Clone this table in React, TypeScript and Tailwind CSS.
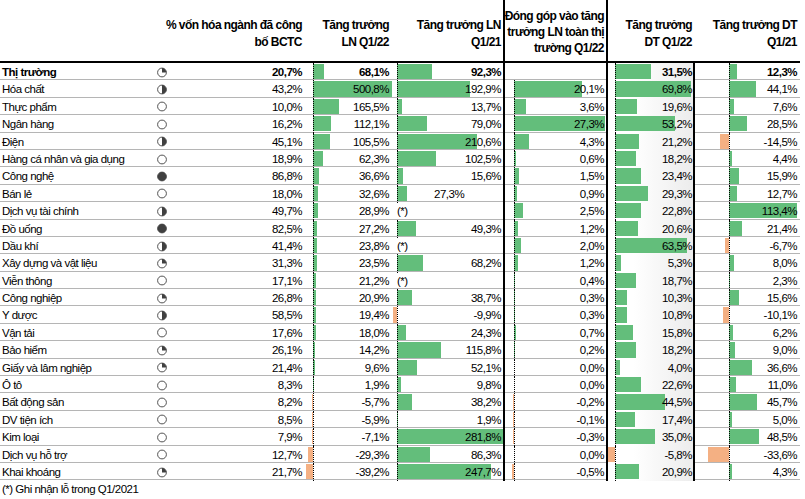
import React from 'react';

type Ball = 'e' | 'q' | 'h' | 'f';
type Note = 'star' | 'left' | undefined;

interface Row {
  name: string;
  ball: Ball;
  von: number;
  ln22: number;
  ln21: number | null;
  note?: Note;
  dg: number | null;
  dt22: number;
  dt21: number;
  bold?: boolean;
}

const rows: Row[] = [
  { name: 'Thị trường', ball: 'q', von: 20.7, ln22: 68.1, ln21: 92.3, dg: null, dt22: 31.5, dt21: 12.3, bold: true },
  { name: 'Hóa chất', ball: 'h', von: 43.2, ln22: 500.8, ln21: 192.9, dg: 20.1, dt22: 69.8, dt21: 44.1 },
  { name: 'Thực phẩm', ball: 'e', von: 10.0, ln22: 165.5, ln21: 13.7, dg: 3.6, dt22: 19.6, dt21: 7.6 },
  { name: 'Ngân hàng', ball: 'e', von: 16.2, ln22: 112.1, ln21: 79.0, dg: 27.3, dt22: 53.2, dt21: 28.5 },
  { name: 'Điện', ball: 'h', von: 45.1, ln22: 105.5, ln21: 210.6, dg: 4.3, dt22: 21.2, dt21: -14.5 },
  { name: 'Hàng cá nhân và gia dụng', ball: 'e', von: 18.9, ln22: 62.3, ln21: 102.5, dg: 0.6, dt22: 18.2, dt21: 4.4 },
  { name: 'Công nghệ', ball: 'f', von: 86.8, ln22: 36.6, ln21: 15.6, dg: 1.5, dt22: 23.4, dt21: 15.9 },
  { name: 'Bán lẻ', ball: 'e', von: 18.0, ln22: 32.6, ln21: 27.3, note: 'left', dg: 0.9, dt22: 29.3, dt21: 12.7 },
  { name: 'Dịch vụ tài chính', ball: 'h', von: 49.7, ln22: 28.9, ln21: null, note: 'star', dg: 2.5, dt22: 22.8, dt21: 113.4 },
  { name: 'Đồ uống', ball: 'f', von: 82.5, ln22: 27.2, ln21: 49.3, dg: 1.2, dt22: 20.6, dt21: 21.4 },
  { name: 'Dầu khí', ball: 'h', von: 41.4, ln22: 23.8, ln21: null, note: 'star', dg: 2.0, dt22: 63.5, dt21: -6.7 },
  { name: 'Xây dựng và vật liệu', ball: 'q', von: 31.3, ln22: 23.5, ln21: 68.2, dg: 1.2, dt22: 5.3, dt21: 8.0 },
  { name: 'Viễn thông', ball: 'e', von: 17.1, ln22: 21.2, ln21: null, note: 'star', dg: 0.4, dt22: 18.7, dt21: 2.3 },
  { name: 'Công nghiệp', ball: 'q', von: 26.8, ln22: 20.9, ln21: 38.7, dg: 0.3, dt22: 10.3, dt21: 15.6 },
  { name: 'Y dược', ball: 'h', von: 58.5, ln22: 19.4, ln21: -9.9, dg: 0.3, dt22: 10.8, dt21: -10.1 },
  { name: 'Vận tải', ball: 'e', von: 17.6, ln22: 18.0, ln21: 24.3, dg: 0.7, dt22: 15.8, dt21: 6.2 },
  { name: 'Bảo hiểm', ball: 'q', von: 26.1, ln22: 14.2, ln21: 115.8, dg: 0.2, dt22: 18.2, dt21: 9.0 },
  { name: 'Giấy và lâm nghiệp', ball: 'q', von: 21.4, ln22: 9.6, ln21: 52.1, dg: 0.0, dt22: 4.0, dt21: 36.6 },
  { name: 'Ô tô', ball: 'e', von: 8.3, ln22: 1.9, ln21: 9.8, dg: 0.0, dt22: 22.6, dt21: 11.0 },
  { name: 'Bất động sản', ball: 'e', von: 8.2, ln22: -5.7, ln21: 38.2, dg: -0.2, dt22: 44.5, dt21: 45.7 },
  { name: 'DV tiện ích', ball: 'e', von: 8.5, ln22: -5.9, ln21: 1.9, dg: -0.1, dt22: 17.4, dt21: 5.0 },
  { name: 'Kim loại', ball: 'e', von: 7.9, ln22: -7.1, ln21: 281.8, dg: -0.3, dt22: 35.0, dt21: 48.5 },
  { name: 'Dịch vụ hỗ trợ', ball: 'e', von: 12.7, ln22: -29.3, ln21: 86.3, dg: 0.0, dt22: -5.8, dt21: -33.6 },
  { name: 'Khai khoáng', ball: 'q', von: 21.7, ln22: -39.2, ln21: 247.7, dg: -0.5, dt22: 20.9, dt21: 4.3 },
];

const fmt = (v: number) => v.toFixed(1).replace('.', ',') + '%';

const GRID = 'grid grid-cols-[155px_15px_135px_88px_110px_103px_87px_107px]';

function HarveyBall({ type }: { type: Ball }) {
  return (
    <svg width="10" height="11" viewBox="0 0 10 11">
      <circle cx="5" cy="5.5" r="4.4" fill={type === 'f' ? '#404040' : '#fff'} stroke="#404040" strokeWidth="0.9" />
      {type === 'q' && <path d="M5 5.5 L5 1.1 A4.4 4.4 0 0 1 9.4 5.5 Z" fill="#404040" />}
      {type === 'h' && <path d="M5 1.1 A4.4 4.4 0 0 1 5 9.9 Z" fill="#404040" />}
    </svg>
  );
}

interface BarProps {
  value: number | null;
  axis: number;
  axisClass: string;
  scale: number;
  negScale: number;
  max: number;
  pr: string;
  bold?: boolean;
  label?: React.ReactNode;
  labelClass?: string;
  gradient?: boolean;
  showAxis?: boolean;
  extra?: string;
}

function BarCell({ value, axis, axisClass, scale, negScale, max, pr, bold, label, labelClass, gradient, showAxis = true, extra = '' }: BarProps) {
  let bar = null;
  if (value !== null && value !== 0) {
    const w = Math.min(max, Math.max(1, Math.abs(value) * (value > 0 ? scale : negScale)));
    bar = (
      <div
        className={`absolute top-[1px] bottom-[2px] ${value > 0 ? 'bg-[#63be7b]' : 'bg-[#f4b083]'}`}
        style={value > 0 ? { left: axis, width: w } : { left: axis - w, width: w }}
      />
    );
  }
  return (
    <div className={`relative h-full ${gradient ? 'bg-linear-to-r from-white from-30% to-[#ececec]' : ''} ${extra}`}>
      {bar}
      {showAxis && <div className={`absolute top-0 bottom-0 border-l border-dotted border-black ${axisClass}`} />}
      <div className={`relative flex h-full items-center pt-[1px] ${labelClass ?? `justify-end ${pr}`} ${bold ? 'font-bold' : ''}`}>
        {label !== undefined ? label : value !== null ? fmt(value) : ''}
      </div>
    </div>
  );
}

function HeaderCell({ lines, pr, extra = '' }: { lines: string[]; pr: string; extra?: string }) {
  return (
    <div className={`flex h-full flex-col items-end justify-center ${lines.length > 2 ? 'pt-[3px]' : 'pt-[6px]'} ${pr} ${extra}`}>
      {lines.map((l) => (
        <span key={l} className="whitespace-nowrap leading-[16.3px]">
          {l}
        </span>
      ))}
    </div>
  );
}

export default function App() {
  return (
    <div className="h-[499px] w-[805px] overflow-hidden bg-white font-['Liberation_Sans',Arial,sans-serif] text-[11.5px] tracking-[-0.5px] text-black">
      <div className="w-[800px]">
        {/* Header */}
        <div className={`${GRID} h-[61px] text-[12px] font-bold tracking-[-0.55px]`}>
          <div />
          <div />
          <HeaderCell lines={['% vốn hóa ngành đã công', 'bố BCTC']} pr="pr-[3px]" />
          <HeaderCell lines={['Tăng trưởng', 'LN Q1/22']} pr="pr-[4px]" />
          <HeaderCell lines={['Tăng trưởng LN', 'Q1/21']} pr="pr-[2px]" />
          <HeaderCell lines={['Đóng góp vào tăng', 'trưởng LN toàn thị', 'trường Q1/22']} pr="pr-[2px]" extra="border-l-2 border-black" />
          <HeaderCell lines={['Tăng trưởng', 'DT Q1/22']} pr="pr-[1px]" extra="border-l-2 border-black" />
          <HeaderCell lines={['Tăng trưởng DT', 'Q1/21']} pr="pr-[3px]" />
        </div>
        <div className="h-[2px] bg-black" />

        {/* Rows */}
        {rows.map((r) => (
          <div key={r.name} className={`${GRID} h-[17.4px] border-b border-[#b5b5b5]`}>
            <div className={`flex h-full items-center whitespace-nowrap pl-[2px] pt-[1px] ${r.bold ? 'font-bold' : ''}`}>{r.name}</div>
            <div className="flex h-full items-center pl-[2px]">
              <HarveyBall type={r.ball} />
            </div>
            <div className={`flex h-full items-center justify-end pr-[3px] pt-[1px] ${r.bold ? 'font-bold' : ''}`}>{fmt(r.von)}</div>
            <BarCell value={r.ln22} axis={8} axisClass="left-[8px]" scale={0.158} negScale={0.17} max={80} pr="pr-[4px]" bold={r.bold} />
            <BarCell
              value={r.ln21}
              axis={4}
              axisClass="left-[4px]"
              scale={0.38}
              negScale={0.4}
              max={106}
              pr="pr-[2px]"
              bold={r.bold}
              showAxis={r.note !== 'star'}
              label={r.note === 'star' ? '(*)' : undefined}
              labelClass={r.note === 'star' ? 'justify-start pl-[4px]' : r.note === 'left' ? 'justify-start pl-[41px]' : undefined}
            />
            <BarCell
              value={r.dg}
              axis={9}
              axisClass="left-[9px]"
              scale={3.4}
              negScale={3.4}
              max={91}
              pr="pr-[2px]"
              showAxis={r.dg !== null}
              extra="border-l-2 border-black"
            />
            <BarCell
              value={r.dt22}
              axis={7}
              axisClass="left-[7px]"
              scale={1.13}
              negScale={1.13}
              max={76}
              pr="pr-[1px]"
              bold={r.bold}
              gradient
              extra="border-l-2 border-black"
            />
            <BarCell
              value={r.dt21}
              axis={34}
              axisClass="left-[34px]"
              scale={0.62}
              negScale={0.62}
              max={68}
              pr="pr-[3px]"
              bold={r.bold}
              extra="border-l-2 border-black"
            />
          </div>
        ))}

        {/* Footer note */}
        <div className="flex h-[18px] items-center pl-[2px] pt-[1px]">(*) Ghi nhận lỗ trong Q1/2021</div>
      </div>
    </div>
  );
}
